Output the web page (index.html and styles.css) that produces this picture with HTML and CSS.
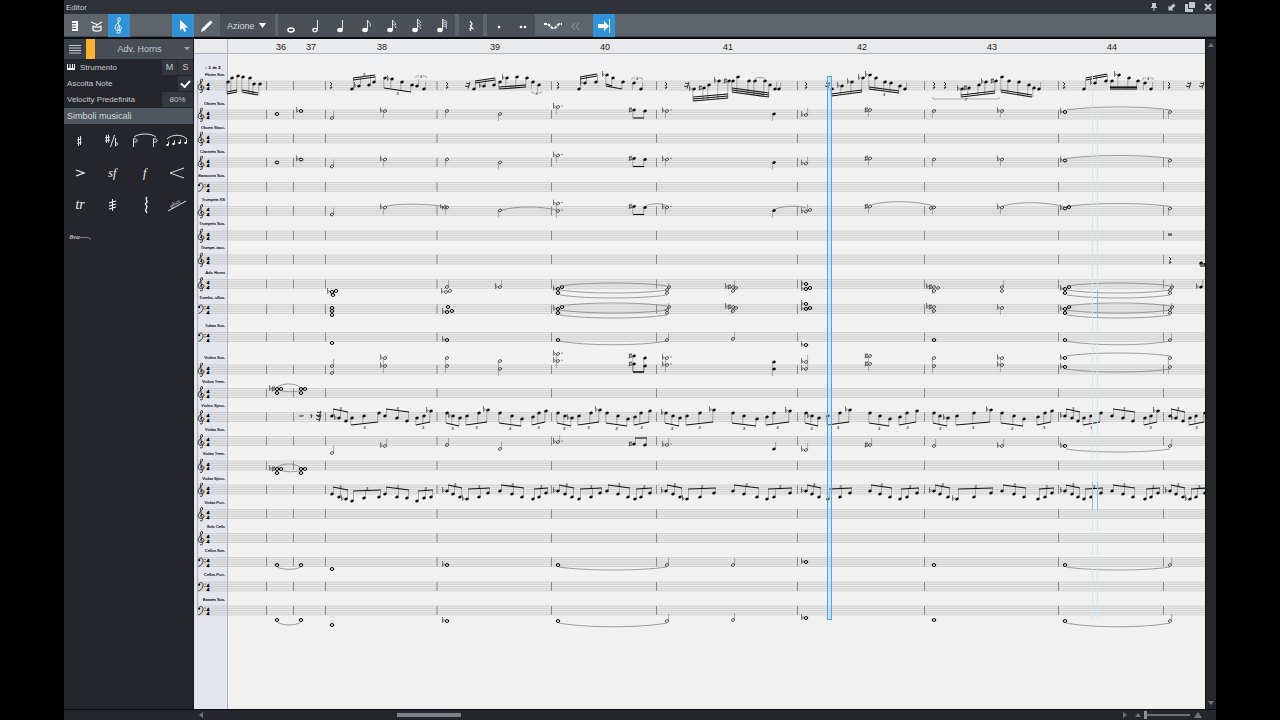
FILE: index.html
```html
<!DOCTYPE html>
<html lang="it">
<head>
<meta charset="utf-8">
<title>Editor</title>
<link rel="stylesheet" href="styles.css">
</head>
<body>
<div class="app">
  <header class="titlebar">
    <span class="title">Editor</span>
    <button class="win-btn" aria-label="Fissa"><svg width="10" height="10" viewBox="0 0 10 10"><path d="M3 1h4v4h1v1H5.500v3h-1V6H2V5h1z"/></svg></button>
    <button class="win-btn" aria-label="Aggancia"><svg width="10" height="10" viewBox="0 0 10 10"><path d="M1.500 3.500v5h5L5 7l3.500-3.500-2-2L3 5z"/></svg></button>
    <button class="win-btn" aria-label="Ingrandisci"><svg width="10" height="10" viewBox="0 0 10 10"><path d="M4 0h6v6H4zM0 2h3v5h5v3H0z"/></svg></button>
    <button class="win-btn" aria-label="Chiudi"><svg width="10" height="10" viewBox="0 0 10 10"><path class="cross" d="M2 2l6 6M8 2l-6 6"/></svg></button>
  </header>

  <nav class="toolbar">
    <div class="group views">
      <button class="tool" aria-label="Piano"><svg width="16" height="16" viewBox="0 0 16 16"><path class="fill" d="M5 3h6v10H5z"/><path class="cut" d="M5 5.500h4M5 8h4M5 10.500h4"/></svg></button>
      <button class="tool" aria-label="Batteria"><svg width="16" height="16" viewBox="0 0 16 16"><path class="line" d="M4 7.500v4.500c2 1.500 6 1.500 8 0V7.500M4 8c2 1.500 6 1.500 8 0M2 4l7 3M13 4L7 7.500"/></svg></button>
      <button class="tool on" aria-label="Partitura"><svg width="16" height="20" viewBox="0 0 16 20"><path class="clef-icon" d="M8 17c-2 1-3-1-1.500-1.500M8 17c1 0 1.500-1 1-3L7 5c-.5-2 .5-3.500 1.500-3.500S9.500 4 8 6c-2 2-4 3.500-4 6 0 3 6 3.500 6.500.5 0-3-4-3-4-.5 0 1 .8 1.500 1.500 1.500"/></svg></button>
    </div>
    <div class="group modes">
      <button class="tool on" aria-label="Freccia"><svg width="16" height="16" viewBox="0 0 16 16"><path class="fill" d="M5 2v10.500l2.500-2.300L9.500 14l1.800-.9-1.900-3.700H13z"/></svg></button>
      <button class="tool pen" aria-label="Matita"><svg width="16" height="16" viewBox="0 0 16 16"><path class="fill" d="M2 14l1-3.500L11.500 2.500 13.500 4.500 5.500 12.500z"/></svg></button>
    </div>
    <button class="action">Azione <svg width="8" height="6" viewBox="0 0 8 6"><path class="fill" d="M0 0h7L3.500 5z"/></svg></button>
    <div class="group dark durations">
      <button class="tool" aria-label="Intera"><svg width="16" height="20" viewBox="0 0 16 20"><ellipse class="ring" cx="7" cy="14" rx="3" ry="1.900"/></svg></button>
      <button class="tool" aria-label="Metà"><svg width="16" height="20" viewBox="0 0 16 20"><ellipse class="line" cx="6" cy="14" rx="2.200" ry="1.700"/><path class="thin" d="M8.500 14V4"/></svg></button>
      <button class="tool" aria-label="Quarto"><svg width="16" height="20" viewBox="0 0 16 20"><ellipse class="fill" cx="6" cy="14" rx="2.800" ry="2.200"/><path class="thin" d="M8.500 14V4"/></svg></button>
      <button class="tool" aria-label="Ottavo"><svg width="16" height="20" viewBox="0 0 16 20"><ellipse class="fill" cx="6" cy="14" rx="2.800" ry="2.200"/><path class="thin" d="M8.500 14V4c1 3 4 3 2.500 6.500"/></svg></button>
      <button class="tool" aria-label="Sedicesimo"><svg width="16" height="20" viewBox="0 0 16 20"><ellipse class="fill" cx="6" cy="14" rx="2.800" ry="2.200"/><path class="thin" d="M8.500 14V4c1 2.500 4 2.500 3 5M8.500 7c1 2.500 4 2.500 3 5"/></svg></button>
      <button class="tool" aria-label="Trentaduesimo"><svg width="16" height="20" viewBox="0 0 16 20"><ellipse class="fill" cx="6" cy="14" rx="2.800" ry="2.200"/><path class="thin" d="M8.500 14V3c1 2 4 2 3 4M8.500 6c1 2 4 2 3 4M8.500 9c1 2 4 2 3 4"/></svg></button>
      <button class="tool" aria-label="Sessantaquattresimo"><svg width="16" height="20" viewBox="0 0 16 20"><ellipse class="fill" cx="6" cy="14" rx="2.800" ry="2.200"/><path class="thin" d="M8.500 14V3c1 2 5 1 4 3.500M8.500 5c1 2 5 1 4 3.500M8.500 7c1 2 5 1 4 3.500M8.500 9c1 2 5 1 4 3.500"/></svg></button>
    </div>
    <div class="group dark rest">
      <button class="tool" aria-label="Pausa"><svg width="10" height="16" viewBox="0 0 10 16"><path class="line" d="M4 3l2 3L4.500 8 6.500 10.500c-2.500-1-3.500 0-1.500 2.500"/></svg></button>
    </div>
    <div class="group dark dots">
      <button class="tool" aria-label="Punto"><svg width="10" height="10" viewBox="0 0 10 10"><circle class="fill" cx="5" cy="6" r="1.300"/></svg></button>
      <button class="tool" aria-label="Doppio punto"><svg width="10" height="10" viewBox="0 0 10 10"><circle class="fill" cx="3" cy="6" r="1.300"/><circle class="fill" cx="7" cy="6" r="1.300"/></svg></button>
    </div>
    <div class="group follow">
      <button class="tool wide" aria-label="Gruppo irregolare"><svg width="20" height="12" viewBox="0 0 20 12"><path class="dash" d="M1 4h4l2 2 2 2h3l2-2 2-2h3"/></svg></button>
      <button class="tool back" aria-label="Indietro"><svg width="10" height="10" viewBox="0 0 10 10"><path class="dim" d="M4 2L1 5.500 4 9M8 2L5 5.500 8 9"/></svg></button>
      <button class="tool on" aria-label="Scorrimento automatico"><svg width="16" height="18" viewBox="0 0 16 18"><path class="fill" d="M2 7h6V4l5 5-5 5v-3H2z"/><path class="thin" d="M13.500 2v14"/></svg></button>
    </div>
  </nav>

  <div class="work">
    <aside class="side">
      <div class="track">
        <button class="menu" aria-label="Menu"><svg width="12" height="10" viewBox="0 0 12 10"><path d="M0 1.500h12M0 4h12M0 6.500h12M0 9h12"/></svg></button>
        <span class="swatch"></span>
        <select class="track-name" aria-label="Traccia"><option>Adv. Horns</option></select>
        <svg class="caret" width="6" height="4" viewBox="0 0 6 4"><path d="M0 0h6L3 3.500z"/></svg>
      </div>
      <div class="row">
        <svg width="8" height="6" viewBox="0 0 8 6"><path class="fill" d="M0 0h1v4h1.500V0h1v4H5V0h1v4h1V0h1v6H0z"/></svg>
        <span class="name inst">Strumento</span>
        <button class="box">M</button><button class="box">S</button>
      </div>
      <div class="row">
        <label class="name" for="listen">Ascolta Note</label>
        <input class="check" type="checkbox" id="listen" checked>
      </div>
      <div class="row">
        <label class="name" for="vel">Velocity Predefinita</label>
        <input class="vel" id="vel" value="80%">
      </div>
      <h2 class="heading">Simboli musicali</h2>
      <div class="symbols">
        <button aria-label="Diesis"><svg width="24" height="16" viewBox="0 0 24 16"><path class="thin" d="M10.500 4v9M12.500 3v9M9.500 7l4-1M9.500 10.500l4-1"/></svg></button>
        <button aria-label="Alterazioni"><svg width="24" height="16" viewBox="0 0 24 16"><path class="thin" d="M6.500 2v8M8.500 1.500v8M5 5l5-1M5 8l5-1M10.500 14l4-12M15.500 5v8c3-1.500 3-4 0-3"/></svg></button>
        <button aria-label="Legatura"><svg width="26" height="16" viewBox="0 0 26 16"><path class="thin" d="M2 4c5-4 17-4 22 0M1.500 5.500V14M1.500 6c5-1 5 4 0 3M21.500 5.500V14M21.500 6c5-1 5 4 0 3"/></svg></button>
        <button aria-label="Frase"><svg width="24" height="16" viewBox="0 0 24 16"><path class="thin" d="M2 6C7 1 17 1 22 6M3.500 12V8.500M9.500 11V7.500M15.500 10V6.500M21.500 10V6.500"/><path class="fill" d="M1.500 11h2v2h-2zM7.500 10h2v2h-2zM13.500 9h2v2h-2zM19.500 9h2v2h-2z"/></svg></button>
        <button aria-label="Accento"><svg width="24" height="16" viewBox="0 0 24 16"><path class="line" d="M8 5l8 3-8 3"/></svg></button>
        <button class="dyn"><i>sf</i></button>
        <button class="dyn"><i>f</i></button>
        <button aria-label="Crescendo"><svg width="24" height="16" viewBox="0 0 24 16"><path class="thin" d="M19 3L5 8l14 5"/></svg></button>
        <button class="dyn tr"><i>tr</i></button>
        <button aria-label="Tremolo"><svg width="24" height="16" viewBox="0 0 24 16"><path class="thin" d="M12.500 2v12"/><path class="line" d="M9 6l7-2M9 9l7-2M9 12l7-2"/></svg></button>
        <button aria-label="Arpeggio"><svg width="24" height="20" viewBox="0 0 24 20"><path class="line" d="M14 2c-2 2-1 2 0 4s-3 2-1 4 1 2 0 4 0 2 1 4"/></svg></button>
        <button aria-label="Glissando"><svg width="24" height="20" viewBox="0 0 24 20"><path class="thin" d="M3 16L21 6"/><text class="tiny" transform="translate(6 13) rotate(-29)">gliss</text></svg></button>
        <button class="ottava"><i>8va</i><span>----,</span></button>
      </div>
    </aside>
    <main class="sheet"><svg id="score" width="100%" height="100%" role="img" aria-label="Partitura"></svg></main>
    <div class="vscroll"><svg width="8" height="6" viewBox="0 0 8 6"><path d="M1 5h6L4 1z"/></svg><svg width="8" height="6" viewBox="0 0 8 6"><path d="M1 1h6L4 5z"/></svg></div>
  </div>

  <footer class="bottom">
    <svg width="6" height="6" viewBox="0 0 6 6"><path d="M5 0v6L1 3z"/></svg>
    <div class="hscroll"><span class="thumb"></span></div>
    <svg width="6" height="6" viewBox="0 0 6 6"><path d="M1 0v6l4-3z"/></svg>
    <svg class="small" width="6" height="6" viewBox="0 0 6 6"><path d="M0 5h6L3 1z"/></svg>
    <input class="zoom" type="range" value="0" aria-label="Zoom">
    <svg width="10" height="8" viewBox="0 0 10 8"><path d="M1 7h8L5 1z"/></svg>
  </footer>
</div>
<script src="score.js"></script>
</body>
</html>
```

FILE: styles.css
```css
* { box-sizing: border-box; }
body { margin: 0; background: #000; font-family: "Liberation Sans", Arial, sans-serif; font-size: 9px; color: #c3c8ce; }
button, input, select { font: inherit; color: inherit; border: 0; padding: 0; margin: 0; background: none; border-radius: 0; }
svg { display: block; flex: none; }
.app { height: 100vh; margin: 0 5%; display: flex; flex-direction: column; background: #24262b; }

.fill { fill: #fff; }
.cut { stroke: #5d646c; fill: none; }
.line { fill: none; stroke: #f4f6f8; stroke-width: 1.3; }
.clef-icon { fill: none; stroke: #f4f6f8; stroke-width: 1; }
.thin { fill: none; stroke: #dfe3e7; stroke-width: 1; }
.ring { fill: none; stroke: #fff; stroke-width: 1.5; }
.dash { fill: none; stroke: #fff; stroke-width: 2; stroke-dasharray: 3 1; }
.dim { fill: none; stroke: #9299a1; stroke-width: 1; }
.tiny { font: italic 6px "Liberation Serif", serif; fill: #dfe3e7; }

.titlebar { flex: none; height: 14px; display: flex; align-items: center; gap: 8px; padding: 0 3px 0 2px; background: #2e3238; font-size: 8px; }
.title { flex: 1; }
.win-btn { width: 10px; }
.win-btn path { fill: #c4c8cc; }
.win-btn .cross { stroke: #c4c8cc; stroke-width: 2; }

.toolbar { flex: none; height: 25px; display: flex; background: #5d646c; border-bottom: 2px solid #0b0c0e; box-shadow: inset 0 -1px #42474e; }
.group { display: flex; }
.tool { width: 22px; display: flex; align-items: center; justify-content: center; }
.tool.pen { width: 26px; }
.tool.on { background: #3292d6; }
.modes { margin-left: 42px; }
.action { display: flex; align-items: center; gap: 4px; width: 55px; padding-left: 7px; background: #4b4f57; color: #d6dade; }
.dark { background: #4b4f57; }
.durations { margin-left: 3px; padding: 0 1px; }
.durations .tool { width: 25px; }
.rest { margin-left: 4px; }
.rest .tool { width: 24px; }
.dots { margin-left: 4px; }
.dots .tool { width: 24px; }
.follow .wide { width: 36px; }
.follow .back { justify-content: flex-start; }

.work { flex: 1; min-height: 0; display: flex; }
.side { flex: none; width: 130px; font-size: 8px; border-right: 1px solid #16181b; }
.track { display: flex; align-items: center; height: 20px; background: #484d55; font-size: 9px; padding-right: 3px; }
.menu { width: 22px; height: 20px; display: flex; align-items: center; justify-content: center; background: #3b3f46; }
.menu path { stroke: #c3c8ce; }
.swatch { width: 9px; height: 20px; background: #fcb131; }
.track-name { flex: 1; appearance: none; text-align: center; text-align-last: center; }
.caret path { fill: #9ba1a8; }
.row { display: flex; align-items: center; height: 16px; padding-left: 3px; gap: 1px; }
.name { flex: 1; }
.inst { padding-left: 4px; }
.box { width: 15px; height: 15px; background: #34373d; font-size: 9px; }
.check { appearance: none; width: 15px; height: 15px; background: #34373d; display: grid; place-items: center; }
.check:checked::after { content: ""; width: 7px; height: 4px; border-left: 2px solid #fff; border-bottom: 2px solid #fff; transform: rotate(-48deg); }
.vel { width: 31px; height: 15px; background: #34373d; text-align: center; }
.heading { margin: 0 0 1px; height: 17px; line-height: 16px; padding-left: 3px; font-size: 9px; font-weight: normal; background: #50565f; color: #d4d8dc; border-top: 1px solid #24262b; }
.symbols { display: grid; grid-template-columns: repeat(4, 1fr); grid-auto-rows: 32px; }
.symbols button { display: flex; align-items: center; justify-content: center; color: #f0f2f4; }
.dyn { font: 12px "Liberation Serif", serif; }
.symbols .tr { font-size: 14px; }
.ottava { font: 7px "Liberation Serif", serif; }

.sheet { flex: 1; min-width: 0; background: #f1f1f1; overflow: hidden; }
.vscroll { flex: none; width: 11px; display: flex; flex-direction: column; justify-content: space-between; align-items: center; padding: 3px 0; background: #26282d; border-left: 1px solid #101113; }
.vscroll path, .bottom path { fill: #70757b; }
.bottom { flex: none; height: 11px; display: flex; align-items: center; padding: 0 13px 0 134px; background: #24262b; border-top: 1px solid #0c0d0f; }
.hscroll { flex: 1; height: 4px; display: grid; grid-template-columns: 21fr 7fr 72fr; }
.thumb { grid-column: 2; background: #7b8087; }
.small { margin: 0 3px 0 7px; }
.zoom { appearance: none; width: 46px; height: 8px; margin-right: 3px; background: linear-gradient(#6c7177, #6c7177) center / 100% 2px no-repeat; }
.zoom::-webkit-slider-thumb { appearance: none; width: 3px; height: 8px; background: #8c9197; }

.margin { fill: #e4e6ed; }
.ruler { fill: #e9eaec; }
.edge { stroke: #b0b3b8; fill: none; }
.num { font: 9px "Liberation Sans", sans-serif; fill: #222; text-anchor: middle; }
.label { font: 4px "Liberation Sans", sans-serif; fill: #000; stroke: #000; stroke-width: .1; text-anchor: end; }
.tempo { font: bold 4px "DejaVu Sans", sans-serif; fill: #000; }
.stave { fill: #c8c8c8; fill-opacity: .2; }
.staff { stroke: #adadad; stroke-width: .4; }
.bar { stroke: #666; stroke-width: .7; }
.meter { font: bold 5px "Liberation Serif", serif; fill: #000; stroke: #000; stroke-width: .4; text-anchor: middle; }
.clef { fill: none; stroke: #222; stroke-width: .9; }
.dot { fill: #000; }
.head { fill: #111; }
.open { fill: none; stroke: #222; stroke-width: .8; }
.whole { fill: none; stroke: #000; stroke-width: 1; }
.stem { stroke: #666; stroke-width: .5; fill: none; }
.acc { stroke: #333; stroke-width: .6; fill: none; }
.beam { stroke: #111; stroke-width: 1.1; }
.slur { stroke: #777; stroke-width: .7; fill: none; }
.trip { font: italic bold 5px "Liberation Serif", serif; fill: #333; text-anchor: middle; }
.pause { stroke: #222; stroke-width: .9; fill: none; }
.playhead { fill: #a8dafb; fill-opacity: .4; stroke: #4fa4e4; stroke-width: 1; }
.ghost { stroke: #cfe8f4; stroke-width: 1; }
.ghost.strong { stroke: #8fc0ea; }
```

FILE: score.js
```js
const NS = 'http://www.w3.org/2000/svg';
const svg = document.getElementById('score');
const root = document.createElementNS(NS, 'g');
root.setAttribute('transform', 'translate(-194 -39)');
svg.appendChild(root);

function el(tag, cls, attrs, text) {
  const e = document.createElementNS(NS, tag);
  e.setAttribute('class', cls);
  for (const k in attrs) e.setAttribute(k, attrs[k]);
  if (text) e.textContent = text;
  root.appendChild(e);
}
const line = (cls, x1, y1, x2, y2) => el('line', cls, { x1, y1, x2, y2 });
const path = (cls, d) => el('path', cls, { d });
const rect = (cls, x, y, width, height) => el('rect', cls, { x, y, width, height });

rect('margin', 194, 39, 34, 2000);
rect('ruler', 194, 39, 3000, 14);
line('edge', 194, 53.5, 3000, 53.5);
line('edge', 227.5, 39, 227.5, 2000);
line('edge', 197.5, 81, 197.5, 615);

[[281, 36], [311, 37], [382, 38], [495, 39], [605, 40], [728, 41], [862, 42], [992, 43], [1112, 44]]
  .forEach(([x, n]) => el('text', 'num', { x, y: 50 }, String(n)));
el('text', 'tempo', { x: 205, y: 69 }, '♩ 1 m 2');

// label, label baseline, top line, bass clef
const staves = [
  ['Flutes Sus.', 76, 81], ['Oboes Sus.', 105, 110], ['Oboes Stacc.', 129, 134], ['Clarinets Sus.', 153, 158],
  ['Bassoons Sus.', 177, 182.5, 1], ['Trumpets KS', 201, 206.5], ['Trumpets Sus.', 225, 231], ['Trumpe..tacc.', 249, 255],
  ['Adv. Horns', 274, 279.5], ['Trombo..sSus.', 299, 304.5, 1], ['Tubas Sus.', 327, 332.5, 1], ['Violins Sus.', 359, 365],
  ['Violins Trem.', 383, 388.5], ['Violins Spicc.', 407, 412.5], ['Violas Sus.', 431, 436.5], ['Violas Trem.', 455, 461],
  ['Violas Spicc.', 480, 485], ['Violas Pizz.', 504, 509.5], ['Solo Cello', 528, 533.5], ['Cellos Sus.', 552, 557.5, 1],
  ['Cellos Pizz.', 576, 582, 1], ['Basses Sus.', 601, 606, 1]
];
const bars = [266.5, 293.5, 325.5, 437, 551.5, 656.5, 797.5, 924.5, 1058.5, 1163.5];
staves.forEach(([name, ly, top, bass]) => {
  el('text', 'label', { x: 225, y: ly }, name);
  rect('stave', 197, top, 3000, 9);
  for (let i = 0; i < 5; i++) line('staff', 197, top + i * 2.25, 3000, top + i * 2.25);
  bars.forEach(x => line('bar', x, top, x, top + 9));
  el('text', 'meter', { x: 208, y: top + 4.5 }, '4');
  el('text', 'meter', { x: 208, y: top + 9 }, '4');
  if (bass) {
    path('clef', `M198.500 ${top + 2.5}c1-3 5-2.500 4.500 1.500c-.5 3-2.500 4-4.500 5M205 ${top + 1.500}v1M205 ${top + 4}v1`);
    el('circle', 'dot', { cx: 199.2, cy: top + 2.8, r: 1 });
  } else {
    path('clef', `M200 ${top + 11}c2 1.500 3-.5 2-3l-1.500-7c-.5-3 2.500-4.500 2-1.500c-.5 2-4.500 4-4.500 7c0 3 6 3 6 .5c0-3-4-2.500-3.500 0`);
  }
});

function accidental(a, x, y) {
  if (a === 'b') path('acc', `M${x} ${y - 4}v5.500c2.500-1.500 2-3.500 0-2.500`);
  if (a === '#') path('acc', `M${x} ${y - 2.5}v5M${x + 1.5} ${y - 3}v5M${x - 1} ${y - 1}l3.500-.6M${x - 1} ${y + 1.5}l3.500-.6`);
  if (a === 'n') path('acc', `M${x} ${y - 3}v4l2-.5M${x + 2} ${y + 3}v-4l-2 .5`);
}
function head(kind, x, y) {
  const cls = { f: 'head', h: 'open', w: 'whole' }[kind];
  const [rx, ry] = { f: [1.9, 1.4], h: [1.7, 1.2], w: [1.8, 1.4] }[kind];
  el('ellipse', cls, { cx: x, cy: y, rx, ry, transform: `rotate(${kind === 'w' ? 0 : -25} ${x} ${y})` });
}
// "[accidentals][f|h|w]x,y[u|d][:]" separated by spaces
function notes(str, dy = 0) {
  str.trim().split(/\s+/).forEach(t => {
    const m = t.match(/^([b#n]*)([fhw])([\d.]+),([\d.]+)([ud]?)(:?)$/);
    const x = +m[3], y = +m[4] + dy;
    [...m[1]].reverse().forEach((a, i) => accidental(a, x - 4.5 - i * 3, y));
    head(m[2], x, y);
    if (m[5] === 'u') line('stem', x + 1.6, y, x + 1.6, y - 7);
    if (m[5] === 'd') line('stem', x - 1.6, y, x - 1.6, y + 7);
    if (m[6]) el('circle', 'dot', { cx: x + 4, cy: y - 1, r: .5 });
  });
}
// beamed group: notes, beam from (x1,y1) to (x2,y2), beam count, optional tuplet digit
function beam(str, x1, y1, x2, y2, count = 1, tuplet) {
  const list = str.split(' ').map(t => t.match(/^([b#]*)([\d.]+),([\d.]+)$/));
  const up = y1 < +list[0][3];
  list.forEach(m => {
    const x = +m[2], y = +m[3];
    [...m[1]].forEach(a => accidental(a, x - 4.5, y));
    head('f', x, y);
    const sx = up ? x + 1.5 : x - 1.2;
    line('stem', sx, y, sx, y1 + (y2 - y1) * (sx - x1) / (x2 - x1));
  });
  for (let i = 0; i < count; i++) {
    const o = (up ? 2 : -2) * i;
    line('beam', x1, y1 + o, x2, y2 + o);
  }
  if (tuplet) el('text', 'trip', { x: (x1 + x2) / 2, y: (y1 + y2) / 2 + (up ? -1 : 5) }, tuplet);
}
const slur = (x1, y1, x2, y2, h) =>
  path('slur', `M${x1} ${y1}C${x1 + (x2 - x1) * .25} ${y1 + h} ${x1 + (x2 - x1) * .75} ${y2 + h} ${x2} ${y2}`);
const rest = (x, y) => path('pause', `M${x - 1} ${y - 3}l2 2l-1.500 1.500l1.500 2c-2-.5-2 0-1 1.500`);
const rest16 = (x, y) => path('pause', `M${x - 2} ${y - 2}q2 1.500 4-.5l-2 6M${x - 3} ${y + 1}q2 1.500 4-.5`);
function bracket(x1, x2, y, dir) {
  path('stem', `M${x1} ${y + 2 * dir}V${y}H${x1 + 3}M${x2 - 3} ${y}H${x2}V${y + 2 * dir}`);
  el('text', 'trip', { x: (x1 + x2) / 2, y: y + 1.5 }, '3');
}

// Flutes
beam('228,82 232,78 238,76', 227, 94, 237, 92, 2);
beam('243,77 250,78 254,84 260,84', 242, 92, 258, 95, 2);
beam('352,89 b359,86 369,85 374,82', 353, 78, 375, 75, 2, '3');
beam('385,78 b392,79 402,82 412,85', 384, 88, 411, 92, 1, '3');
notes('f417,86u f424,89u');
bracket(416, 426, 76, 1);
beam('474,89 b484,86 494,85', 475, 81, 495, 78, 2);
beam('500,82 b507,78 517,77 527,78', 499, 89, 526, 87, 2);
notes('f533,82d f539,85d');
bracket(532, 541, 93, -1);
beam('579,89 b585,83 596,82', 580, 77, 597, 74, 2);
beam('b607,75 613,78 623,82', 606, 86, 622, 89, 1);
line('beam', 606, 84, 612, 86);
notes('f634,83d f641,89u');
bracket(632, 642, 78, 1);
beam('b694,89 #704,88 709,85 b719,81 #729,81', 693, 101, 728, 98, 3);
beam('733,81 738,77 749,81 755,81 765,81 770,85', 732, 92, 769, 97, 3);
slur(755, 79, 765, 79, -2);
notes('f775,89u f779,89u');
beam('832,89 b842,86 b852,82 b863,78', 831, 96, 862, 92, 2);
beam('b870,75 876,78 885,82 891,83 900,86', 869, 89, 899, 93, 2, '3');
notes('f905,89u');
path('stem', 'M933 97v2h66v-2');
el('text', 'trip', { x: 966, y: 101 }, '7');
beam('b962,89 #969,88 979,85 b986,82 #996,81', 961, 97, 995, 93, 2);
beam('1002,77 1009,81 1019,82 1029,85 1034,88', 1001, 92, 1032, 97, 2);
notes('f1039,89u');
beam('1084,89 b1095,83 1106,81', 1086, 78, 1107, 74, 2);
beam('1112,81 b1119,75 1129,78 1138,81', 1110, 89, 1137, 89, 2);
line('beam', 1110, 87.5, 1137, 87.5);
notes('f1145,83d f1151,89u');
bracket(1143, 1153, 78, 1);
[331, 447, 558, 666, 806, 934, 945, 1064, 1169].forEach(x => rest(x, 85));
[468, 687, 828, 1189, 1202].forEach(x => rest16(x, 85));

// Oboes, clarinets and trumpets share one line
const melody = 'h332,118u bh385,111d h447,111d h500,114d bh558,107d: bh667,111d: f774,114d bh806,115u #h870,110d h934,111d bh1002,111d bw1065,112 h1170,112d';
[0, 48.5, 96.5].forEach(dy => {
  notes(melody, dy);
  beam(`#634,${110 + dy} 645,${111 + dy}`, 633, 118 + dy, 644, 118 + dy);
  slur(1067, 110 + dy, 1170, 110 + dy, -4);
});
notes('w277,114 bw301,111');
notes('w277,114 bw301,111', 48.5);
notes('h558,211d: nh445,207 h810,210 h931,208 w1069,207');
slur(387, 206, 447, 207, -3);
slur(502, 210, 556, 210, -4);
slur(646, 206, 667, 206, -3);
slur(775, 209, 806, 208, -3);
slur(871, 205, 934, 206, -5);
slur(1003, 206, 1065, 207, -5);
path('pause', 'M1168 234h4M1168 235h4');
rest(1170, 260);
beam('1201,263 1206,264', 1200, 266, 1208, 266, 2);

// Horns and trombones
notes('bw332,292 w336,291 w333,295 h447,287u bh446,292 h450,291 bh500,287u b#h733,287u h736,288 h733,291 bw806,284 bw806,289 w810,288 b#h934,287d h938,288 h934,291 h1002,287u h1002,291 bf1201,287u');
notes('w332,308 w332,311 w332,315 w448,307 bw447,312 w452,311 b#h733,307d h736,308 h733,311 bw806,304 bw806,309 w810,308 b#h934,307d h934,311 bh1002,308d');
[0, 20].forEach(dy => [0, 507].forEach(dx => {
  notes(`bw${558 + dx},${289 + dy} w${562 + dx},${287 + dy} w${558 + dx},${293 + dy}`);
  const e = dx ? 1170 : 667;
  notes(`h${e + 2},${287 + dy} h${e},${290 + dy}u h${e},${293 + dy}`);
  slur(560 + dx, 286 + dy, e, 286 + dy, -4);
  slur(560 + dx, 290 + dy, e, 290 + dy, 4);
  slur(560 + dx, 295 + dy, e, 295 + dy, 4);
}));

// Low voices
notes('w332,343 bw447,340 w558,340 h667,340u h733,339u bw806,345 w934,340 w1065,340 h1170,340u');
notes('w277,565 w301,565 w332,569 bw447,565 w558,565 h667,565u h733,565u bw806,562 w934,565 w1065,565 h1170,565u');
notes('w277,620 w301,620 w332,625 bw447,621 w558,621 h667,621u h733,620u bw806,618 w934,620 w1065,621 h1170,621u');
[[341, 5], [567, 4], [623, 5]].forEach(([y, h]) => {
  slur(559, y, 667, y, h);
  slur(1066, y, 1170, y, h);
});
slur(277, 567, 301, 567, 3);
slur(277, 622, 301, 622, 4);
[617, 620, 622].forEach(y => line('staff', 330, y, 335, y));

// Violins sustained
notes('h332,366u h332,373u bh385,358d bh385,366d h447,358d h447,366d h500,361d h500,369d bh558,354d: bh558,361d: bh667,358d: bh667,365d: f774,362d f774,369d bh806,362u bh806,369u #h870,356d #h870,364d h934,358d h934,366d bh1002,358d bh1002,365d bw1065,358 bw1065,367 h1170,358d h1170,367d');
beam('#634,356 645,358', 633, 372, 644, 372);
beam('#634,364 645,366', 633, 372, 644, 372);
slur(1066, 356, 1170, 356, -4);
slur(1066, 369, 1170, 369, 4);

// Tremolo chords
[0, 80].forEach(dy => {
  notes('b#w277,389 w281,389 w277,393 w301,389 w305,389 w301,393', dy);
  slur(277, 387 + dy, 300, 387 + dy, -4);
  slur(282, 391 + dy, 299, 391 + dy, 1);
});

// Violas sustained
notes('h332,453u bh385,446u h447,445u h500,449u bh558,442u: bh667,445u: f774,449u bh806,450u #h870,445u h934,446u bh1002,446u bw1065,446 h1170,446u');
beam('#634,444 645,445', 635, 438, 647, 438);
slur(1066, 449, 1170, 449, 4);

// Spiccato triplets: twelve x positions per bar
const xs = [
  [332, 339, 346, 352, 364, 379, 385, 397, 407, 417, 424, 431],
  [447, 453, 460, 467, 479, 488, 500, 512, 522, 533, 539, 546],
  [558, 565, 572, 579, 591, 600, 607, 618, 628, 635, 641, 650],
  [666, 673, 680, 687, 700, 714, 733, 744, 757, 767, 774, 790],
  [806, 812, 819, 828, 840, 850, 870, 880, 890, 900, 907, 917],
  [934, 940, 948, 957, 974, 991, 1002, 1014, 1024, 1038, 1045, 1052],
  [1065, 1072, 1078, 1084, 1091, 1101, 1112, 1123, 1133, 1145, 1151, 1158],
  [1170, 1176, 1183, 1190, 1196, 1205]
];
const outer = [416, 418, 421, 418, 416, 413, 416, 418, 421, 418, 416, 411];
const inner = [413, 416, 418, 416, 413, 410, 413, 416, 419, 417, 413, 411];
const low = [494, 497, 499, 501, 498, 497, 494, 497, 498, 501, 498, 497];
const high = [491, 494, 497, 499, 497, 493, 491, 494, 497, 499, 497, 493];
xs.forEach((row, b) => {
  const wide = b === 0 || b > 5;
  const vy = wide ? outer : inner, ay = b === 0 ? low : high;
  for (let i = 0; i < row.length; i += 3) {
    const odd = (i / 3) % 2;
    const group = (ys, flat) => [0, 1, 2].map(k => `${k === flat ? 'b' : ''}${row[i + k]},${ys[i + k]}`).join(' ');
    const a = row[i], z = row[i + 2];
    const flat = i === 0 ? (b === 0 ? 1 : b % 3) : (i === 3 && !wide) || (i === 9 && b % 3 === 0) ? 2 : -1;
    if (wide && !odd) beam(group(vy, flat), a + 1, 409, z + 2, 412, 1, '3');
    else if (odd) beam(group(vy, flat), a - 1, 425, z - 1, 422, 1, '3');
    else beam(group(vy, flat), a - 1, 423, z - 1, 426, 1, '3');
    const t = b === 0 ? 487 : 485;
    if (odd) beam(group(ay, i === 3 && b % 2 ? 0 : -1), a + 1, t + 4, z + 2, t + 3, 1, '3');
    else beam(group(ay, i === 0 ? (b === 0 ? 2 : 0) : -1), a + 1, t, z + 2, t + 3, 1, '3');
  }
});
path('pause', 'M299 416h4M310 415h2l-1 3M303 415v1');
rest16(319, 414);
rest16(319, 418);

// Playback position and its trail
rect('playhead', 827.5, 76.5, 4, 543);
line('ghost', 1092.5, 75, 1092.5, 618);
line('ghost', 1097.5, 110, 1097.5, 618);
line('ghost strong', 1092.5, 482, 1092.5, 511);
line('ghost strong', 1097.5, 482, 1097.5, 511);
line('ghost strong', 1097.5, 290, 1097.5, 318);
```
